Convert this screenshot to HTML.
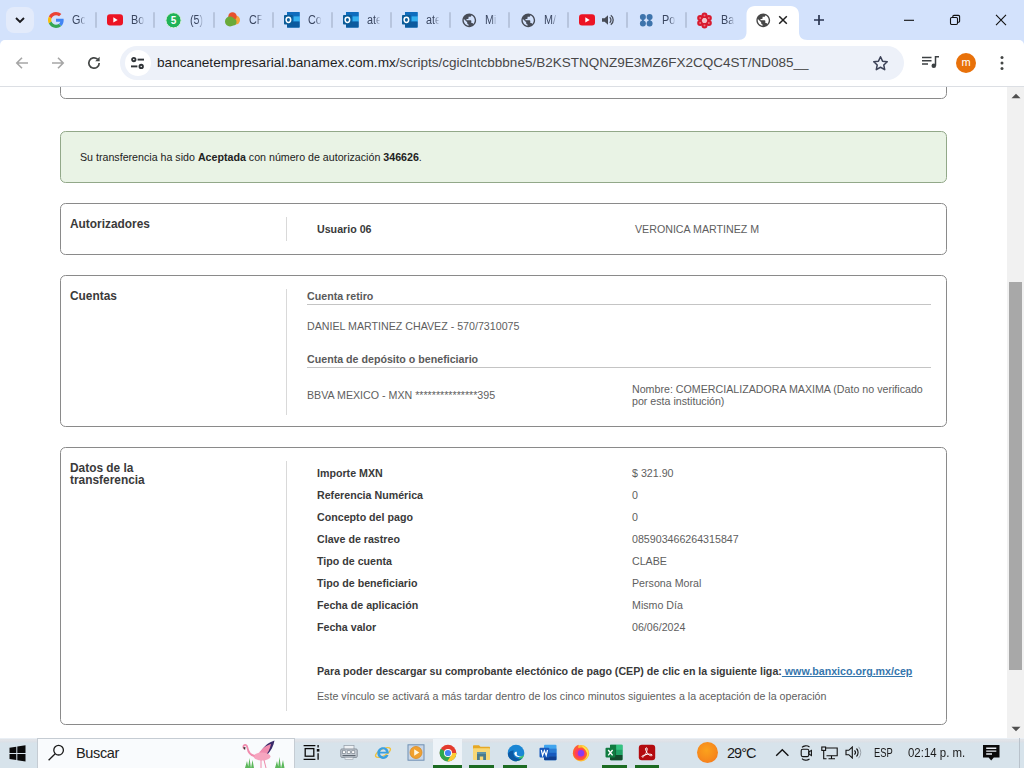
<!DOCTYPE html>
<html lang="es">
<head>
<meta charset="utf-8">
<title>BancaNet Empresarial</title>
<style>
*{box-sizing:border-box;margin:0;padding:0}
html,body{width:1024px;height:768px;overflow:hidden;background:#fff;font-family:"Liberation Sans",Arial,sans-serif}
.abs{position:absolute}
#tabstrip{position:absolute;left:0;top:0;width:1024px;height:52px;background:#d3e2fc}
#toolbar{position:absolute;left:0;top:40px;width:1024px;height:47px;background:#fff;border-bottom:1px solid #dcdfe4;border-radius:5px 5px 0 0}
#omni{position:absolute;left:120px;top:6px;width:784px;height:34px;border-radius:17px;background:#edf1f9}
#omni .chip{position:absolute;left:5px;top:4px;width:26px;height:26px;border-radius:13px;background:#fff}
#url{position:absolute;left:37px;top:8px;font-size:13.5px;line-height:18px;color:#1f1f1f;white-space:nowrap;letter-spacing:0}
#url span{color:#474747}
.tabtxt{position:absolute;top:12px;font-size:12px;line-height:16px;color:#3a4660;white-space:nowrap;overflow:hidden;width:15px;transform-origin:0 0;transform:scaleX(.9);-webkit-mask-image:linear-gradient(to right,#000 55%,transparent 100%);mask-image:linear-gradient(to right,#000 55%,transparent 100%)}
.sep{position:absolute;top:12px;width:2px;height:16px;background:#b7c5de;border-radius:1px}
#content{position:absolute;left:0;top:87px;width:1007px;height:651px;background:#fff;overflow:hidden;font-size:10.66px;line-height:12px;color:#555}
.panel{position:absolute;left:60px;width:887px;border:1px solid #8a8a8a;border-radius:5.5px;background:#fff}
.ptitle{position:absolute;left:9px;font-size:11.9px;font-weight:bold;color:#3a3a3a;line-height:12px}
.sub{position:absolute;left:246px;width:624px;height:17px;border-bottom:1px solid #c4c4c4;font-weight:bold;color:#5a5a5a;white-space:nowrap}
.vline{position:absolute;left:225px;width:1px;background:#d9d9d9}
.lab{position:absolute;left:256px;font-weight:bold;color:#3a3a3a;white-space:nowrap}
.val{position:absolute;left:571px;color:#5e5e5e;white-space:nowrap}
.lnk{color:#3576ad;text-decoration:underline}
#scroll{position:absolute;left:1007px;top:87px;width:17px;height:651px;background:#f1f1f1}
#thumb{position:absolute;left:2px;top:195px;width:13px;height:388px;background:#a8a8a8}
#taskbar{position:absolute;left:0;top:738px;width:1024px;height:30px;background:linear-gradient(#dcdfe4 0,#e2e5e9 2px,#dbe0e6 4px,#d7e3eb 5px)}
</style>
</head>
<body>
<div id="tabstrip">
<div class="abs" style="left:6px;top:7px;width:28px;height:26px;border-radius:8px;background:#e3ebfb"></div>
<svg class="abs" style="left:14px;top:15px" width="12" height="10" viewBox="0 0 12 10"><path d="M2 3l4 4l4-4" fill="none" stroke="#1b1b1f" stroke-width="1.900"/></svg>
<svg class="abs" style="left:48px;top:12px" width="16" height="16" viewBox="0 0 48 48"><path fill="#EA4335" d="M24 9.500c3.540 0 6.710 1.220 9.210 3.600l6.850-6.850C35.900 2.380 30.470 0 24 0 14.620 0 6.510 5.380 2.560 13.220l7.980 6.190C12.430 13.720 17.740 9.500 24 9.500z"/><path fill="#4285F4" d="M46.980 24.550c0-1.570-.15-3.090-.38-4.550H24v9.020h12.940c-.58 2.960-2.260 5.480-4.780 7.180l7.730 6c4.510-4.180 7.090-10.360 7.090-17.650z"/><path fill="#FBBC05" d="M10.530 28.590c-.48-1.450-.76-2.990-.76-4.590s.27-3.140.76-4.590l-7.980-6.190C.92 16.460 0 20.120 0 24c0 3.880.92 7.540 2.560 10.780l7.970-6.190z"/><path fill="#34A853" d="M24 48c6.480 0 11.930-2.130 15.890-5.810l-7.730-6c-2.150 1.450-4.920 2.300-8.160 2.300-6.260 0-11.570-4.220-13.470-9.910l-7.980 6.190C6.510 42.620 14.620 48 24 48z"/></svg>
<div class="tabtxt" style="left:72px">Google</div>
<div class="sep" style="left:94.6px"></div>
<svg class="abs" style="left:107px;top:14px" width="16" height="12" viewBox="0 0 16 12"><rect x="0" y="0.300" width="16" height="11.200" rx="3" fill="#ec1424"/><path d="M6.300 3.200l4.400 2.700l-4.400 2.700z" fill="#fff"/></svg>
<div class="tabtxt" style="left:131px">Bodas</div>
<div class="sep" style="left:153.4px"></div>
<svg class="abs" style="left:165px;top:12px" width="17" height="17" viewBox="0 0 17 17"><circle cx="8.500" cy="8.300" r="7.600" fill="#20b358" stroke="#d9efe0" stroke-width="1"/><text x="8.500" y="12" font-size="10" font-weight="bold" text-anchor="middle" fill="#fff" font-family="Liberation Sans, sans-serif">5</text></svg>
<div class="tabtxt" style="left:190px">(5) WhatsApp</div>
<div class="sep" style="left:212.8px"></div>
<svg class="abs" style="left:224px;top:11px" width="17" height="17" viewBox="0 0 17 17"><circle cx="11.500" cy="9" r="4.500" fill="#f7a23b"/><circle cx="8.500" cy="5.500" r="4.200" fill="#e8502e"/><circle cx="6" cy="10.500" r="5" fill="#6aaa3a"/><circle cx="9" cy="11" r="3.500" fill="#6aaa3a"/></svg>
<div class="tabtxt" style="left:249px">CFDI</div>
<div class="sep" style="left:272.1px"></div>
<svg class="abs" style="left:283px;top:11px" width="17" height="17" viewBox="0 0 17 17"><rect x="4" y="1" width="12.600" height="15.600" rx="1" fill="#1a8ad6"/><rect x="4" y="1" width="12.600" height="4.500" fill="#0f6cbd"/><rect x="11" y="5.500" width="5.600" height="5" fill="#35b0ee"/><rect x="4" y="10.500" width="12.600" height="6.100" fill="#0c5a9e"/><rect x="1" y="4" width="8.800" height="9.600" rx=".8" fill="#0b5c98"/><ellipse cx="5.400" cy="8.800" rx="2.300" ry="2.600" fill="none" stroke="#fff" stroke-width="1.500"/></svg>
<div class="tabtxt" style="left:308px">Correo</div>
<div class="sep" style="left:331px"></div>
<svg class="abs" style="left:342px;top:11px" width="17" height="17" viewBox="0 0 17 17"><rect x="4" y="1" width="12.600" height="15.600" rx="1" fill="#1a8ad6"/><rect x="4" y="1" width="12.600" height="4.500" fill="#0f6cbd"/><rect x="11" y="5.500" width="5.600" height="5" fill="#35b0ee"/><rect x="4" y="10.500" width="12.600" height="6.100" fill="#0c5a9e"/><rect x="1" y="4" width="8.800" height="9.600" rx=".8" fill="#0b5c98"/><ellipse cx="5.400" cy="8.800" rx="2.300" ry="2.600" fill="none" stroke="#fff" stroke-width="1.500"/></svg>
<div class="tabtxt" style="left:367px">atencion</div>
<div class="sep" style="left:390px"></div>
<svg class="abs" style="left:401px;top:11px" width="17" height="17" viewBox="0 0 17 17"><rect x="4" y="1" width="12.600" height="15.600" rx="1" fill="#1a8ad6"/><rect x="4" y="1" width="12.600" height="4.500" fill="#0f6cbd"/><rect x="11" y="5.500" width="5.600" height="5" fill="#35b0ee"/><rect x="4" y="10.500" width="12.600" height="6.100" fill="#0c5a9e"/><rect x="1" y="4" width="8.800" height="9.600" rx=".8" fill="#0b5c98"/><ellipse cx="5.400" cy="8.800" rx="2.300" ry="2.600" fill="none" stroke="#fff" stroke-width="1.500"/></svg>
<div class="tabtxt" style="left:426px">atencion</div>
<div class="sep" style="left:449.3px"></div>
<svg class="abs" style="left:460.75px;top:11.750px" width="16.500" height="16.500" viewBox="0 0 24 24"><path d="M12 2C6.48 2 2 6.48 2 12s4.48 10 10 10 10-4.48 10-10S17.520 2 12 2zm-1 17.930c-3.950-.49-7-3.850-7-7.930 0-.62.080-1.210.210-1.790L9 15v1c0 1.100.9 2 2 2v1.930zm6.900-2.540c-.26-.81-1-1.390-1.900-1.390h-1v-3c0-.55-.45-1-1-1H8v-2h2c.55 0 1-.45 1-1V7h2c1.100 0 2-.9 2-2v-.41c2.930 1.190 5 4.060 5 7.410 0 2.080-.8 3.970-2.100 5.390z" fill="#474c57"/></svg>
<div class="tabtxt" style="left:485px;width:13px">Mi</div>
<div class="sep" style="left:508px"></div>
<svg class="abs" style="left:519.75px;top:11.750px" width="16.500" height="16.500" viewBox="0 0 24 24"><path d="M12 2C6.48 2 2 6.48 2 12s4.48 10 10 10 10-4.48 10-10S17.520 2 12 2zm-1 17.930c-3.950-.49-7-3.850-7-7.930 0-.62.080-1.210.210-1.790L9 15v1c0 1.100.9 2 2 2v1.930zm6.900-2.540c-.26-.81-1-1.390-1.900-1.390h-1v-3c0-.55-.45-1-1-1H8v-2h2c.55 0 1-.45 1-1V7h2c1.100 0 2-.9 2-2v-.41c2.930 1.190 5 4.060 5 7.410 0 2.080-.8 3.970-2.100 5.390z" fill="#474c57"/></svg>
<div class="tabtxt" style="left:544px">M/</div>
<div class="sep" style="left:567px"></div>
<svg class="abs" style="left:579px;top:14px" width="16" height="12" viewBox="0 0 16 12"><rect x="0" y="0.300" width="16" height="11.200" rx="3" fill="#ec1424"/><path d="M6.300 3.200l4.400 2.700l-4.400 2.700z" fill="#fff"/></svg>
<svg class="abs" style="left:601px;top:14px" width="14" height="12" viewBox="0 0 14 12"><path d="M1 4.200h2.600L7 1.200v9.600L3.600 7.800H1z" fill="#474c57"/><path d="M8.700 3.300a3.500 3.500 0 0 1 0 5.400" fill="none" stroke="#474c57" stroke-width="1.300"/><path d="M9.800 1.200a6 6 0 0 1 0 9.600" fill="none" stroke="#474c57" stroke-width="1.300"/></svg>
<div class="sep" style="left:625.7px"></div>
<svg class="abs" style="left:639px;top:12.500px" width="14.500" height="14.500" viewBox="0 0 16 16"><g fill="#3e74ac"><circle cx="4.300" cy="4.300" r="3.300"/><circle cx="11.700" cy="4.300" r="3.300"/><circle cx="4.300" cy="11.700" r="3.300"/><circle cx="11.700" cy="11.700" r="3.300"/><rect x="3.300" y="4" width="2" height="8"/><rect x="10.700" y="4" width="2" height="8"/></g></svg>
<div class="tabtxt" style="left:662px">Portal</div>
<div class="sep" style="left:684.6px"></div>
<svg class="abs" style="left:696px;top:11.500px" width="17" height="17" viewBox="0 0 17 17"><g fill="#d81a2e"><circle cx="8.50" cy="3.50" r="3"/><circle cx="12.83" cy="6.00" r="3"/><circle cx="12.83" cy="11.00" r="3"/><circle cx="8.50" cy="13.50" r="3"/><circle cx="4.17" cy="11.00" r="3"/><circle cx="4.17" cy="6.00" r="3"/></g><g fill="#e8707c"><circle cx="8.50" cy="3.50" r="1"/><circle cx="12.83" cy="6.00" r="1"/><circle cx="12.83" cy="11.00" r="1"/><circle cx="8.50" cy="13.50" r="1"/><circle cx="4.17" cy="11.00" r="1"/><circle cx="4.17" cy="6.00" r="1"/></g><circle cx="8.500" cy="8.500" r="2.500" fill="#f3c4cb"/></svg>
<div class="tabtxt" style="left:721px">BancaNet</div>
<svg class="abs" style="left:738px;top:6px" width="72" height="34" viewBox="0 0 72 34"><path d="M0 34C5.500 34 8.500 31 8.500 26V9C8.500 3.500 11.500 0 17 0H52.500C58 0 61 3.500 61 9V26C61 31 64 34 69.500 34z" fill="#fff"/></svg>
<svg class="abs" style="left:754.75px;top:11.750px" width="16.500" height="16.500" viewBox="0 0 24 24"><path d="M12 2C6.48 2 2 6.48 2 12s4.48 10 10 10 10-4.48 10-10S17.520 2 12 2zm-1 17.930c-3.950-.49-7-3.850-7-7.930 0-.62.080-1.210.210-1.790L9 15v1c0 1.100.9 2 2 2v1.930zm6.900-2.540c-.26-.81-1-1.390-1.900-1.390h-1v-3c0-.55-.45-1-1-1H8v-2h2c.55 0 1-.45 1-1V7h2c1.100 0 2-.9 2-2v-.41c2.930 1.190 5 4.060 5 7.410 0 2.080-.8 3.970-2.100 5.390z" fill="#474747"/></svg>
<svg class="abs" style="left:777px;top:14px" width="12" height="12" viewBox="0 0 12 12"><path d="M2.200 2.200l7.600 7.600M9.800 2.200l-7.600 7.600" stroke="#1f1f1f" stroke-width="1.500"/></svg>
<svg class="abs" style="left:813px;top:14px" width="12" height="12" viewBox="0 0 12 12"><path d="M6 1v10M1 6h10" stroke="#2a3550" stroke-width="1.700"/></svg>
<svg class="abs" style="left:903px;top:14px" width="12" height="12" viewBox="0 0 12 12"><path d="M1 6.300h10" stroke="#111" stroke-width="1.100"/></svg>
<svg class="abs" style="left:949px;top:14px" width="12" height="12" viewBox="0 0 12 12"><rect x="1.500" y="3.500" width="7" height="7" rx="1.200" fill="none" stroke="#111" stroke-width="1.100"/><path d="M3.800 3.300V2.600a1.200 1.200 0 0 1 1.200-1.200h4.400a1.200 1.200 0 0 1 1.200 1.200v4.400a1.200 1.200 0 0 1-1.200 1.200H8.800" fill="none" stroke="#111" stroke-width="1.100"/></svg>
<svg class="abs" style="left:995px;top:14px" width="12" height="12" viewBox="0 0 12 12"><path d="M1 0.800l10 10.400M11 0.800l-10 10.400" stroke="#111" stroke-width="1.100"/></svg>
</div>
<div id="toolbar">
<svg class="abs" style="left:14px;top:15px" width="16" height="16" viewBox="0 0 16 16"><path d="M14 8H3M8 2.800L2.800 8L8 13.200" fill="none" stroke="#a6a6a6" stroke-width="1.600"/></svg>
<svg class="abs" style="left:50px;top:15px" width="16" height="16" viewBox="0 0 16 16"><path d="M2 8h11M8 2.800L13.200 8L8 13.200" fill="none" stroke="#a6a6a6" stroke-width="1.600"/></svg>
<svg class="abs" style="left:86px;top:15px" width="16" height="16" viewBox="0 0 16 16"><path d="M13.200 8a5.200 5.200 0 1 1-1.700-3.850" fill="none" stroke="#444746" stroke-width="1.700"/><path d="M13.600 1.800v4.400H9.200z" fill="#444746"/></svg>
  <div id="omni"><div class="chip"></div>
<svg class="abs" style="left:10px;top:10px" width="15" height="14" viewBox="0 0 15 14"><g fill="none" stroke="#2f3337" stroke-width="1.900"><circle cx="3.800" cy="3.600" r="1.700"/><path d="M7.600 3.600H14"/><circle cx="11.200" cy="10.400" r="1.700"/><path d="M1 10.400H7.400"/></g></svg>
<svg class="abs" style="left:751.500px;top:8.500px" width="17" height="17" viewBox="0 0 18 18"><path d="M9 1.900l2.150 4.600l5 .600l-3.700 3.450l1 4.950L9 13l-4.450 2.500l1-4.950L1.850 7.100l5-.600z" fill="none" stroke="#3c4257" stroke-width="1.600" stroke-linejoin="round"/></svg>

  <div id="url"><b style="font-weight:normal;font-size:13.65px">bancanetempresarial.banamex.com.mx</b><span>/scripts/cgiclntcbbbne5/B2KSTNQNZ9E3MZ6FX2CQC4ST/ND085__</span></div></div>
<svg class="abs" style="left:921px;top:15px" width="19" height="14" viewBox="0 0 19 14"><g fill="none" stroke="#3c4043" stroke-width="1.500"><path d="M1 2.500h9.500M1 5.700h9.500M1 8.900h6"/><path d="M14.500 10.500V1.800h3.500"/></g><circle cx="12.800" cy="10.800" r="2.300" fill="#3c4043"/></svg>
<div class="abs" style="left:956px;top:13px;width:20px;height:20px;border-radius:10px;background:#e8710a;color:#fff;font-size:11px;line-height:18px;text-align:center">m</div>
<svg class="abs" style="left:999px;top:15px" width="6" height="16" viewBox="0 0 6 16"><g fill="#444746"><circle cx="3" cy="2.600" r="1.500"/><circle cx="3" cy="8" r="1.500"/><circle cx="3" cy="13.400" r="1.500"/></g></svg>
</div>
<div id="content">
  <div class="panel" style="top:-20px;height:32px"></div>
  <div class="panel" style="top:44px;height:52px;background:#e9f3e5;border-color:#92a889">
    <div class="abs" style="left:19px;top:19px;color:#222;white-space:nowrap">Su transferencia ha sido <b>Aceptada</b> con número de autorización <b>346626</b>.</div>
  </div>
  <div class="panel" style="top:116px;height:52px">
    <div class="ptitle" style="top:14px">Autorizadores</div>
    <div class="vline" style="top:13px;height:24px"></div>
    <div class="lab" style="top:19px">Usuario 06</div>
    <div class="val" style="top:19px;left:574px">VERONICA MARTINEZ M</div>
  </div>
  <div class="panel" style="top:188px;height:152px">
    <div class="ptitle" style="top:14px">Cuentas</div>
    <div class="vline" style="top:13px;height:126px"></div>
    <div class="sub" style="top:12px"><span style="position:relative;top:2px">Cuenta retiro</span></div>
    <div class="val" style="left:246px;top:44px">DANIEL MARTINEZ CHAVEZ - 570/7310075</div>
    <div class="sub" style="top:75px"><span style="position:relative;top:2px">Cuenta de depósito o beneficiario</span></div>
    <div class="val" style="left:246px;top:113px">BBVA MEXICO - MXN ***************395</div>
    <div class="val" style="left:571px;top:107px;white-space:normal;width:300px">Nombre: COMERCIALIZADORA MAXIMA (Dato no verificado por esta institución)</div>
  </div>
  <div class="panel" style="top:360px;height:278px">
    <div class="ptitle" style="top:14px">Datos de la<br>transferencia</div>
    <div class="vline" style="top:13px;height:250px"></div>
    <div class="lab" style="top:19px">Importe MXN</div><div class="val" style="top:19px">$ 321.90</div>
    <div class="lab" style="top:41px">Referencia Numérica</div><div class="val" style="top:41px">0</div>
    <div class="lab" style="top:63px">Concepto del pago</div><div class="val" style="top:63px">0</div>
    <div class="lab" style="top:85px">Clave de rastreo</div><div class="val" style="top:85px">085903466264315847</div>
    <div class="lab" style="top:107px">Tipo de cuenta</div><div class="val" style="top:107px">CLABE</div>
    <div class="lab" style="top:129px">Tipo de beneficiario</div><div class="val" style="top:129px">Persona Moral</div>
    <div class="lab" style="top:151px">Fecha de aplicación</div><div class="val" style="top:151px">Mismo Día</div>
    <div class="lab" style="top:173px">Fecha valor</div><div class="val" style="top:173px">06/06/2024</div>
    <div class="lab" style="top:217px">Para poder descargar su comprobante electónico de pago (CEP) de clic en la siguiente liga:<span class="lnk"> www.banxico.org.mx/cep</span></div>
    <div class="val" style="left:256px;top:242px">Este vínculo se activará a más tardar dentro de los cinco minutos siguientes a la aceptación de la operación</div>
  </div>
</div>
<div id="scroll"><div id="thumb"></div>
<svg class="abs" style="left:4px;top:6px" width="10" height="6" viewBox="0 0 10 6"><path d="M0.500 5.200L5 0.800L9.500 5.200z" fill="#505050"/></svg>
<svg class="abs" style="left:4px;top:639px" width="10" height="6" viewBox="0 0 10 6"><path d="M0.500 0.800L5 5.200L9.500 0.800z" fill="#505050"/></svg>
</div>
<div id="taskbar">
<div class="abs" style="left:0;top:0;width:1024px;height:1px;background:#e9eff5"></div>
<svg class="abs" style="left:9px;top:7px" width="17" height="17" viewBox="0 0 17 17"><path d="M0.500 2.700L7.300 1.700V7.900H0.500zM8.300 1.550L16.500 0.300V7.900H8.300zM0.500 8.900H7.300V15.100L0.500 14.100zM8.300 8.900H16.500V16.500L8.300 15.250z" fill="#0a0a0a"/></svg>
<div class="abs" style="left:37px;top:0;width:258px;height:30px;background:#f9fbfd;border:1px solid #c5ccd3;border-bottom:none"></div>
<svg class="abs" style="left:46px;top:6px" width="20" height="18" viewBox="0 0 20 18"><circle cx="12.600" cy="6.200" r="4.800" fill="none" stroke="#1a1a1a" stroke-width="1.300"/><path d="M9.200 9.700L2.600 16.200" stroke="#1a1a1a" stroke-width="1.300"/></svg>
<div class="abs" style="left:76px;top:6px;font-size:14.5px;line-height:18px;color:#222;letter-spacing:-.35px">Buscar</div>
<svg class="abs" style="left:240px;top:1px" width="52" height="29" viewBox="0 0 52 29"><path d="M20 14C24 6 30 3 34.500 1.500C33.500 7 31 12 27 16z" fill="#3a2a6a"/><path d="M19 14C22 9 27 6 31 5C30 10 28 14 25 17z" fill="#f08cae"/><ellipse cx="22" cy="17.500" rx="8.500" ry="4" fill="#f6a5bf"/><path d="M14.500 17C10 16 8 12 7.500 9C7 6 5 5 3.500 7C3 8.500 4 10 5 9.500" fill="none" stroke="#f08cae" stroke-width="1.800"/><path d="M3 8.500L5 11L5.500 8z" fill="#333"/><path d="M21 21V29M24 21L26 29" stroke="#ee88aa" stroke-width="1"/><path d="M8 29L9.500 19L11 29zM5 29L7 22L8.500 29zM11 29L12.500 21L14 29zM38 29L39.500 18L41 29zM41 29L43 21L44.500 29zM35 29L37 22L38.500 29z" fill="#5cb85c"/></svg>
<svg class="abs" style="left:303px;top:7px" width="18" height="15" viewBox="0 0 18 15"><g fill="none" stroke="#0a0a0a" stroke-width="1.300"><rect x="2.200" y="3.600" width="8.600" height="7.600"/><path d="M0.600 0.700H12.400M0.600 14.300H12.400"/></g><rect x="13.800" y="4" width="2.600" height="2.600" fill="#0a0a0a"/><path d="M15.100 0V2.500M15.100 8.200V14.800" stroke="#0a0a0a" stroke-width="1.300"/></svg>
<svg class="abs" style="left:340px;top:7px" width="18" height="15" viewBox="0 0 18 15"><rect x="4" y="0.500" width="10" height="4" fill="#eef1f4" stroke="#9aa3ad" stroke-width=".8"/><rect x="0.800" y="4" width="16.400" height="8.400" rx="1" fill="#c5ccd4" stroke="#7f8892" stroke-width=".9"/><g fill="#fff" stroke="#6d7680" stroke-width=".6"><rect x="2.600" y="5.800" width="3" height="2.600"/><rect x="7.200" y="5.800" width="3" height="2.600"/><rect x="11.800" y="5.800" width="3" height="2.600"/></g><rect x="2.500" y="10" width="13" height="1.200" fill="#5f6872"/><rect x="5" y="12.400" width="8" height="2" fill="#eef1f4" stroke="#9aa3ad" stroke-width=".6"/></svg>
<svg class="abs" style="left:374px;top:6px" width="18" height="17" viewBox="0 0 18 17"><ellipse cx="9" cy="8.500" rx="8.300" ry="3.400" transform="rotate(-28 9 8.500)" fill="none" stroke="#f2c23c" stroke-width="1.400"/><path d="M14.800 9.600H6.100c.1 1.800 1.400 2.800 3 2.800c1.300 0 2.200-.6 2.700-1.500h2.700c-.8 2.500-2.900 4-5.500 4c-3.300 0-5.700-2.500-5.700-5.800s2.500-5.800 5.800-5.800c3.600 0 5.900 2.700 5.700 6.300zM6.200 7.700h5.700c-.2-1.500-1.300-2.400-2.800-2.400s-2.600.9-2.900 2.400z" fill="#3aa0e0"/></svg>
<svg class="abs" style="left:407px;top:6px" width="18" height="17" viewBox="0 0 18 17"><rect x="1" y="0.800" width="16" height="15.400" fill="#c9d6e6" stroke="#6f8fb4" stroke-width="1"/><circle cx="9" cy="8.500" r="6" fill="#f0a030"/><circle cx="9" cy="8.500" r="6" fill="none" stroke="#d98a20" stroke-width=".8"/><path d="M7.200 5.300L12.300 8.500L7.200 11.700z" fill="#fff7e0"/></svg>
<div class="abs" style="left:433px;top:1px;width:29px;height:29px;background:#eef3f8"></div>
<svg class="abs" style="left:439px;top:6px" width="18" height="18" viewBox="0 0 18 18"><circle cx="9" cy="9" r="8.300" fill="#e33b2e"/><path d="M9 9L1.800 4.850A8.300 8.300 0 0 0 4.850 16.200z" fill="#2da94f"/><path d="M9 9L4.850 16.200A8.300 8.300 0 0 0 17.300 9z" fill="#2da94f"/><path d="M9 9H17.300A8.300 8.300 0 0 1 8.400 17.280L12.600 10.500z" fill="#fcc934"/><path d="M9 9L13 11.300L8.900 17.300A8.300 8.300 0 0 0 17.300 9z" fill="#fcc934"/><circle cx="9" cy="9" r="4" fill="#fff"/><circle cx="9" cy="9" r="3.100" fill="#4285f4"/></svg>
<svg class="abs" style="left:472px;top:6px" width="19" height="17" viewBox="0 0 19 17"><path d="M1 2.200c0-.6.400-1 1-1h5l1.500 1.600H17c.6 0 1 .4 1 1V6H1z" fill="#e6a825"/><rect x="1" y="4.200" width="17" height="11.800" rx=".8" fill="#f8d775"/><path d="M5 16V9.500h9V16h-2.800v-3.600H7.800V16z" fill="#4a7a8c"/><rect x="5" y="8" width="9" height="2" fill="#5f93a6"/></svg>
<svg class="abs" style="left:507px;top:6px" width="18" height="18" viewBox="0 0 18 18"><circle cx="9" cy="9" r="8.300" fill="#1a86d4"/><path d="M17.300 9a8.300 8.300 0 0 1-12 7.400C9 17 12 15 13 12.500c2 0 4.300-1 4.300-3.500z" fill="#3fc36c"/><path d="M0.800 10c1.200-2.400 3.500-3.600 5.900-3.400c-.4 1-.5 2-.4 3c.3 3 2.800 5.200 6.200 5.200c1.200 0 2.300-.3 3-.7A8.300 8.300 0 0 1 .8 10z" fill="#0c59a4"/><path d="M7.300 9.800c.3 1.900 2.200 3.100 4.400 3.100c1.400 0 2.600-.5 3.400-1.200c-.8.400-1.700.6-2.700.500c-2.200-.2-3-1.400-2.600-2.400c.3-.8.100-1.700-.6-2.300C8 7.900 7.200 8.800 7.300 9.800z" fill="#fff"/></svg>
<svg class="abs" style="left:539px;top:6px" width="18" height="17" viewBox="0 0 18 17"><rect x="5" y="0.800" width="12.500" height="15.400" rx="1" fill="#41a5ee"/><rect x="5" y="4.650" width="12.500" height="3.850" fill="#2b7cd3"/><rect x="5" y="8.500" width="12.500" height="3.850" fill="#185abd"/><path d="M5 12.350h12.500v2.850a1 1 0 0 1-1 1H6a1 1 0 0 1-1-1z" fill="#103f91"/><rect x="0.500" y="3.800" width="9.800" height="9.800" rx="1" fill="#185abd"/><path d="M2.300 6l1.300 5.400L5.400 6.600L7.200 11.400L8.500 6" fill="none" stroke="#fff" stroke-width="1.200"/></svg>
<svg class="abs" style="left:572px;top:6px" width="18" height="18" viewBox="0 0 18 18"><circle cx="9" cy="9.300" r="8.200" fill="#ffbd30"/><path d="M1 8C1.500 4 4 1.500 7 .8C6 2 6 3.200 6.500 4c2-1 5-.5 6.500 1c1.800 1.800 2.500 4.500 1.500 7c-1.200 3-4 4.500-7 4.200C3.500 15.800.600 12.500 1 8z" fill="#ff5a36"/><path d="M3 8.500C3.500 6 5.500 4.500 8 4.500c3 0 5 2 5 4.800c0 3-2.200 5-5 5c-3 0-5.500-2.500-5-5.800z" fill="#ff3c5f"/><circle cx="9" cy="9.300" r="3.200" fill="#8a3cf0"/><path d="M9.500 1.500c3 .5 6 3 6.800 6.500c.6 3-1 6.500-4 8c3-2.500 3.500-6 2-8.500C13.300 5.500 11.500 4 9.500 1.500z" fill="#ffe14a"/></svg>
<svg class="abs" style="left:605px;top:6px" width="18" height="17" viewBox="0 0 18 17"><rect x="5" y="0.800" width="12.500" height="15.400" rx="1" fill="#21a366"/><rect x="5" y="0.800" width="6.250" height="5.100" fill="#107c41"/><rect x="11.250" y="0.800" width="6.250" height="5.100" fill="#33c481"/><rect x="5" y="5.900" width="6.250" height="5.100" fill="#185c37"/><rect x="11.250" y="5.900" width="6.250" height="5.100" fill="#21a366"/><path d="M5 11h12.500v4.200a1 1 0 0 1-1 1H6a1 1 0 0 1-1-1z" fill="#134a2c"/><rect x="0.500" y="3.800" width="9.800" height="9.800" rx="1" fill="#107c41"/><path d="M3.200 6l4.400 5.400M7.600 6L3.200 11.400" stroke="#fff" stroke-width="1.400"/></svg>
<svg class="abs" style="left:638px;top:6px" width="18" height="17" viewBox="0 0 18 17"><rect x="0.800" y="0.800" width="16.400" height="15.400" rx="3" fill="#b30b0f"/><path d="M4 12.600c.3 1.200 1.800.3 3-1.500c1.100-1.700 2.200-4.400 2.200-6.200c0-1.500-1.600-1.500-1.600 0c0 2 2 5.300 4.200 6.500c1.500.8 2.800.2 2.200-.6c-.7-.9-3.700-.8-6.300-.100c-2 .5-3.900 1.100-3.700 1.900z" fill="none" stroke="#fff" stroke-width="1"/></svg>
<div class="abs" style="left:433px;top:27px;width:29px;height:3px;background:#1c6b22"></div>
<div class="abs" style="left:469px;top:27px;width:25px;height:3px;background:#1c6b22"></div>
<div class="abs" style="left:503px;top:27px;width:24px;height:3px;background:#1c6b22"></div>
<div class="abs" style="left:602px;top:27px;width:25px;height:3px;background:#1c6b22"></div>
<div class="abs" style="left:635px;top:27px;width:24px;height:3px;background:#1c6b22"></div>
<div class="abs" style="left:697px;top:4px;width:21px;height:21px;border-radius:11px;background:radial-gradient(circle at 45% 40%,#fba21c 0%,#f78a1c 55%,#f2701c 100%)"></div>
<div class="abs" style="left:727px;top:6px;font-size:14.5px;line-height:18px;color:#1a1a1a;letter-spacing:-1px">29°C</div>
<svg class="abs" style="left:775px;top:10px" width="15" height="9" viewBox="0 0 15 9"><path d="M1.200 7.800L7.300 1.700L13.400 7.800" fill="none" stroke="#111" stroke-width="1.400"/></svg>
<svg class="abs" style="left:800px;top:6px" width="14" height="18" viewBox="0 0 14 18"><g fill="none" stroke="#111" stroke-width="1.100"><rect x="1.200" y="5.200" width="7.600" height="7.400" rx="1.500"/><path d="M8.800 8l2.600-1.600v5.200L8.800 10z"/><path d="M2 3.400c1.500-1.700 5-2.300 7.500-.4M2 14.600c1.500 1.700 5 2.300 7.500.4"/></g></svg>
<svg class="abs" style="left:821px;top:8px" width="18" height="14" viewBox="0 0 18 14"><g fill="none" stroke="#111" stroke-width="1.100"><path d="M4.500 2H16.200V9.800H5.500"/><path d="M10.500 9.800V12.600M7.500 12.800H14"/><rect x="0.800" y="1" width="3.800" height="3.400"/><path d="M2.700 4.400V12.800H5.500"/></g></svg>
<svg class="abs" style="left:845px;top:8px" width="18" height="13" viewBox="0 0 18 13"><g fill="none" stroke="#111" stroke-width="1.100"><path d="M1 4.300H3.800L7.300 1V12L3.800 8.700H1z"/><path d="M9.500 4.300a3.200 3.200 0 0 1 0 4.400M11.500 2.500a5.800 5.800 0 0 1 0 8"/></g><path d="M13.600 0.800a8.500 8.500 0 0 1 0 11.400" fill="none" stroke="#9aa2aa" stroke-width="1"/></svg>
<div class="abs" style="left:874px;top:7px;font-size:12px;line-height:16px;color:#1a1a1a;transform-origin:0 0;transform:scaleX(.78)">ESP</div>
<div class="abs" style="left:908px;top:7px;font-size:12.3px;line-height:16px;color:#1a1a1a;white-space:nowrap;transform-origin:0 0;transform:scaleX(.93)">02:14 p. m.</div>
<svg class="abs" style="left:983px;top:7px" width="17" height="16" viewBox="0 0 17 16"><path d="M0 0H16.500V12.600H10.800L8.200 15.600L5.600 12.600H0z" fill="#0a0a0a"/><path d="M3.200 3.200H13.300M3.200 6.100H13.300M3.200 9H9" stroke="#e9eef3" stroke-width="1.400"/></svg>
<div class="abs" style="left:1019px;top:0;width:1px;height:30px;background:#b9c2cb"></div>
</div>
</body>
</html>
